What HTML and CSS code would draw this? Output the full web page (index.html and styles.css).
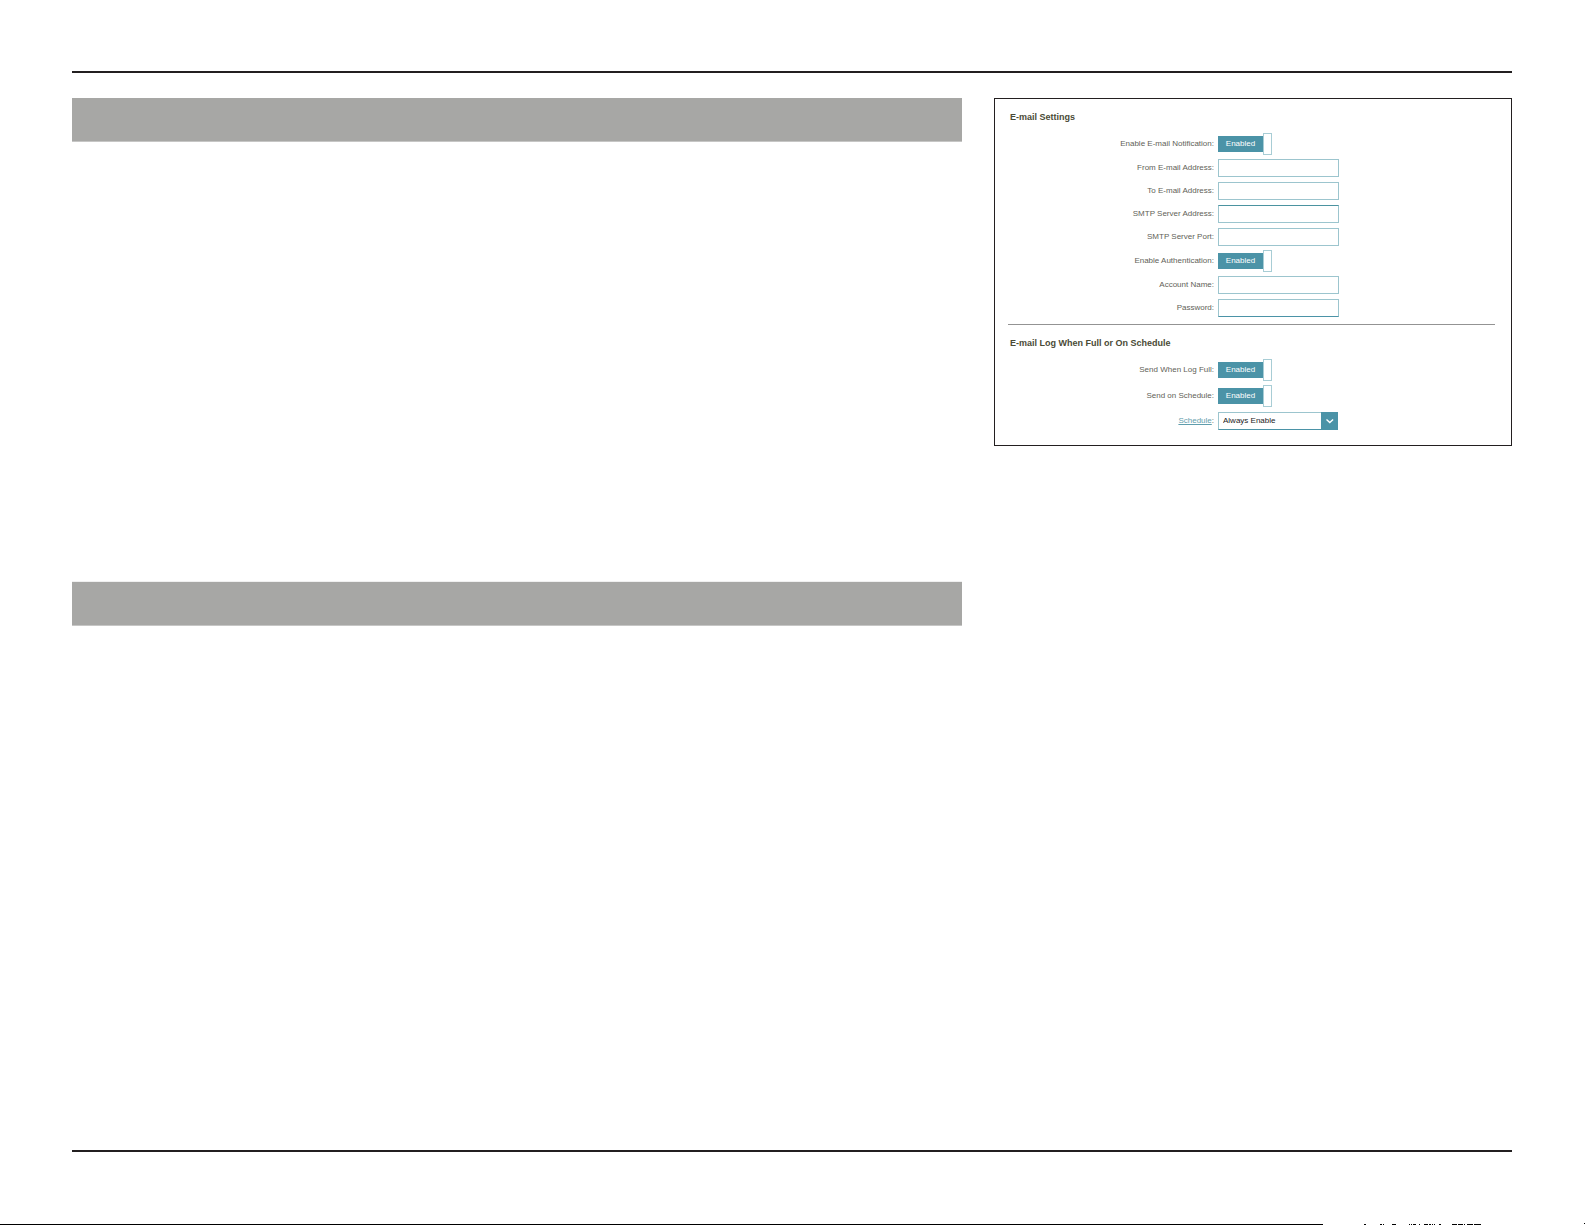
FILE: index.html
```
<!DOCTYPE html>
<html lang="en">
<head>
    <meta charset="UTF-8">
    <meta name="viewport" content="width=device-width, initial-scale=1.0">
    <title>E-mail Settings</title>
    <link rel="stylesheet" href="styles.css">
</head>
<body>
    <div class="page">
        <main class="content">
            <div class="sections">
                <section class="section"><div class="bar"></div></section>
                <section class="section"><div class="bar bar-second"></div></section>
            </div>

            <form class="panel">
                <h2>E-mail Settings</h2>
                <div class="rows">
                    <div class="row row-toggle">
                        <label for="notify">Enable E-mail Notification:</label>
                        <button type="button" class="toggle" id="notify" role="switch" aria-checked="true"><span class="toggle-text">Enabled</span><span class="knob"></span></button>
                    </div>
                    <div class="row">
                        <label for="from">From E-mail Address:</label>
                        <input type="email" id="from">
                    </div>
                    <div class="row">
                        <label for="to">To E-mail Address:</label>
                        <input type="email" id="to">
                    </div>
                    <div class="row">
                        <label for="server">SMTP Server Address:</label>
                        <input type="text" id="server" class="dark-top">
                    </div>
                    <div class="row">
                        <label for="port">SMTP Server Port:</label>
                        <input type="text" id="port">
                    </div>
                    <div class="row row-toggle">
                        <label for="auth">Enable Authentication:</label>
                        <button type="button" class="toggle" id="auth" role="switch" aria-checked="true"><span class="toggle-text">Enabled</span><span class="knob"></span></button>
                    </div>
                    <div class="row">
                        <label for="account">Account Name:</label>
                        <input type="text" id="account">
                    </div>
                    <div class="row">
                        <label for="password">Password:</label>
                        <input type="password" id="password" class="dark-bottom">
                    </div>
                </div>

                <hr>

                <h2>E-mail Log When Full or On Schedule</h2>
                <div class="rows rows-log">
                    <div class="row row-toggle">
                        <label for="full">Send When Log Full:</label>
                        <button type="button" class="toggle" id="full" role="switch" aria-checked="true"><span class="toggle-text">Enabled</span><span class="knob"></span></button>
                    </div>
                    <div class="row row-toggle">
                        <label for="on-schedule">Send on Schedule:</label>
                        <button type="button" class="toggle" id="on-schedule" role="switch" aria-checked="true"><span class="toggle-text">Enabled</span><span class="knob"></span></button>
                    </div>
                    <div class="row">
                        <label for="schedule"><a href="#schedule">Schedule</a>:</label>
                        <div class="select">
                            <select id="schedule">
                                <option>Always Enable</option>
                            </select>
                            <svg class="arrow" viewBox="0 0 17 18" aria-hidden="true">
                                <rect width="17" height="18" fill="#4b93a7"/>
                                <path d="M5.5 7.5 L8.8 10.5 L12.1 7.5" fill="none" stroke="#fff" stroke-width="1.4"/>
                            </svg>
                        </div>
                    </div>
                </div>
            </form>
        </main>
    </div>

    <!-- Bottom edge -->
    <div class="edge">
        <div class="edge-line"></div>
        <svg class="edge-marks" viewBox="0 0 262 2" shape-rendering="crispEdges" aria-hidden="true">
            <path d="M41 1h2v1h-2zM57 1h2v1h-2zM60 1h1v1h-1zM69 1h4v1h-4zM86 1h1v1h-1zM88 1h1v1h-1zM90 1h3v1h-3zM96 1h1v1h-1zM101 1h4v1h-4zM106 1h2v1h-2zM109 1h1v1h-1zM111 1h1v1h-1zM116 1h2v1h-2zM129 1h5v1h-5zM135 1h5v1h-5zM141 1h1v1h-1zM144 1h6v1h-6zM151 1h7v1h-7zM261 0h1v1h-1z"/>
        </svg>
    </div>
</body>
</html>
```
FILE: styles.css
```
* {
    box-sizing: border-box;
}

body {
    margin: 0;
    min-height: 100vh;
    display: flex;
    flex-direction: column;
    background-color: #fff;
    font-family: "Liberation Sans", Arial, sans-serif;
    font-size: 8px;
    line-height: 12px;
    color: #625f58;
}

.page {
    flex: 1;
    display: flex;
    margin: 71px 73px 71px 72px;
    padding-top: 25px;
    border-top: 2px solid #231f20;
    border-bottom: 2px solid #231f20;
}

.content {
    flex: 1;
    display: grid;
    grid-template-columns: 1fr 518px;
    column-gap: 32px;
    align-items: start;
}

.section {
    min-height: 483px;
}

.bar {
    height: 44px;
    background-color: #a7a7a5;
    border-bottom: 1px solid #c6c6c5;
}

.bar-second {
    height: 45px;
    border-top: 1px solid #f0f0f0;
}

/* Settings panel */
.panel {
    padding: 12px 16px 15px 13px;
    border: 1px solid #231f20;
}

h2 {
    margin: 0 0 11px 2px;
    font-size: 9px;
    line-height: 12px;
    color: #4a4a36;
}

hr {
    height: 1px;
    margin: 7px 0 12px;
    border: none;
    background-color: #939393;
}

.rows {
    display: flex;
    flex-direction: column;
    gap: 5px;
}

.rows-log {
    gap: 6px;
}

.row {
    display: grid;
    grid-template-columns: 206px 121px;
    column-gap: 4px;
    align-items: center;
    height: 18px;
}

.row-toggle {
    height: 20px;
}

.row label {
    text-align: right;
    white-space: nowrap;
}

.row a {
    color: #5f9dac;
}

input {
    width: 100%;
    height: 18px;
    padding: 0 4px;
    border: 1px solid #9cc5ce;
    background-color: #fff;
    font: inherit;
}

.dark-top {
    border-top-color: #4b93a0;
}

.dark-bottom {
    border-bottom-color: #4b93a7;
}

.toggle {
    display: flex;
    align-items: center;
    justify-self: start;
    height: 20px;
    padding: 0;
    border: none;
    background: none;
    font: inherit;
    cursor: pointer;
}

.toggle-text {
    width: 45px;
    height: 16px;
    line-height: 16px;
    background-color: #4b93a7;
    color: #fff;
    text-align: center;
}

.knob {
    width: 9px;
    height: 22px;
    flex: none;
    border: 1px solid #a8cdd5;
    background-color: #fff;
}

.select {
    position: relative;
    width: 120px;
    height: 18px;
}

.select select {
    display: block;
    width: 100%;
    height: 18px;
    padding: 0 20px 0 4px;
    border: 1px solid #9cc5ce;
    border-bottom-color: #4b93a7;
    border-radius: 0;
    appearance: none;
    background-color: #fff;
    color: #222;
    font: inherit;
}

.arrow {
    position: absolute;
    top: 0;
    right: 0;
    width: 17px;
    height: 18px;
    pointer-events: none;
}

.edge {
    display: flex;
    align-items: flex-end;
}

.edge-line {
    flex: 1;
    height: 1px;
    background-color: #000;
}

.edge-marks {
    display: block;
    width: 262px;
    height: 2px;
}
```
